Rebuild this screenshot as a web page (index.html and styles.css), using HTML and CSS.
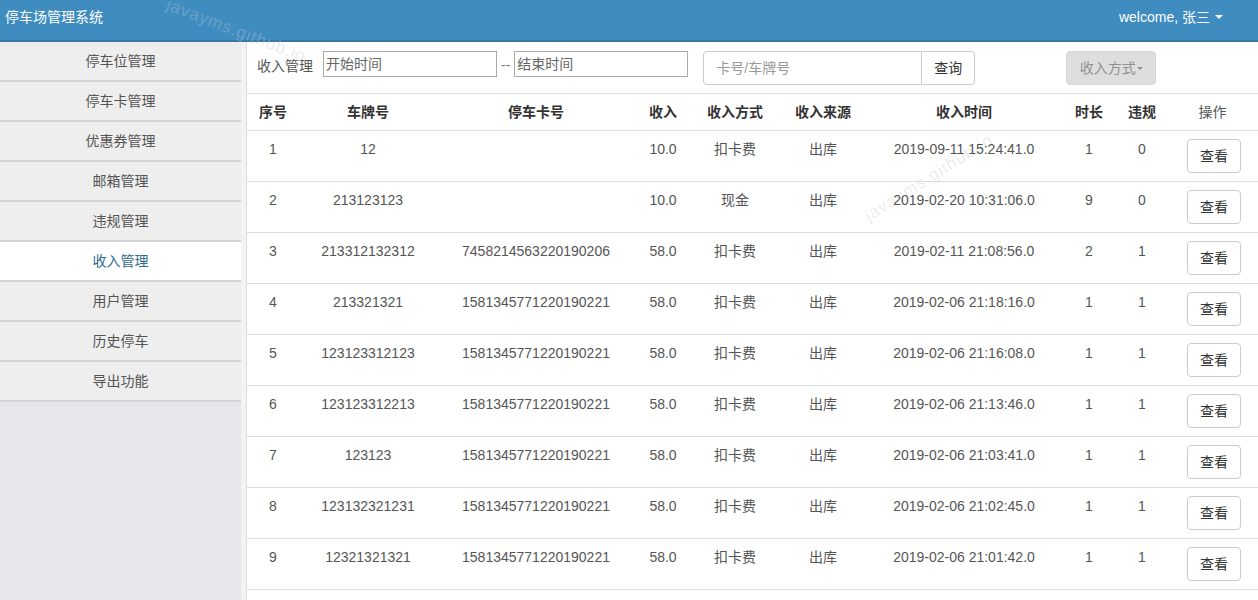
FILE: index.html
```html
<!DOCTYPE html>
<html lang="zh-CN">
<head>
<meta charset="utf-8">
<title>停车场管理系统</title>
<link rel="stylesheet" href="styles.css">
</head>
<body>
<header class="topbar">
  <div class="brand">停车场管理系统</div>
  <div class="user">welcome, 张三 <span class="caret"></span></div>
</header>
<span class="mark mark-top">javayms.github.io</span>
<div class="layout">
  <nav class="sidebar">
    <a class="nav-item">停车位管理</a>
    <a class="nav-item">停车卡管理</a>
    <a class="nav-item">优惠券管理</a>
    <a class="nav-item">邮箱管理</a>
    <a class="nav-item">违规管理</a>
    <a class="nav-item active">收入管理</a>
    <a class="nav-item">用户管理</a>
    <a class="nav-item">历史停车</a>
    <a class="nav-item">导出功能</a>
  </nav>
  <main class="main">
    <div class="toolbar">
      <span class="tb-label">收入管理</span>
      <input class="date-input" type="text" placeholder="开始时间">
      <span class="dash">--</span>
      <input class="date-input" type="text" placeholder="结束时间">
      <div class="search-group">
        <input class="search-input" type="text" placeholder="卡号/车牌号">
        <button class="search-btn" type="button">查询</button>
      </div>
      <button class="type-btn" type="button">收入方式<span class="caret small"></span></button>
    </div>
    <table class="data">
      <colgroup>
        <col class="c1"><col class="c2"><col class="c3"><col class="c4"><col class="c5">
        <col class="c6"><col class="c7"><col class="c8"><col class="c9"><col class="c10">
      </colgroup>
      <thead>
        <tr><th>序号</th><th>车牌号</th><th>停车卡号</th><th>收入</th><th>收入方式</th><th>收入来源</th><th>收入时间</th><th>时长</th><th>违规</th><th class="op">操作</th></tr>
      </thead>
      <tbody>
        <tr><td>1</td><td>12</td><td></td><td>10.0</td><td>扣卡费</td><td>出库</td><td>2019-09-11 15:24:41.0</td><td>1</td><td>0</td><td><button class="view-btn" type="button">查看</button></td></tr>
        <tr><td>2</td><td>213123123</td><td></td><td>10.0</td><td>现金</td><td>出库</td><td>2019-02-20 10:31:06.0</td><td>9</td><td>0</td><td><button class="view-btn" type="button">查看</button></td></tr>
        <tr><td>3</td><td>213312132312</td><td>7458214563220190206</td><td>58.0</td><td>扣卡费</td><td>出库</td><td>2019-02-11 21:08:56.0</td><td>2</td><td>1</td><td><button class="view-btn" type="button">查看</button></td></tr>
        <tr><td>4</td><td>213321321</td><td>1581345771220190221</td><td>58.0</td><td>扣卡费</td><td>出库</td><td>2019-02-06 21:18:16.0</td><td>1</td><td>1</td><td><button class="view-btn" type="button">查看</button></td></tr>
        <tr><td>5</td><td>123123312123</td><td>1581345771220190221</td><td>58.0</td><td>扣卡费</td><td>出库</td><td>2019-02-06 21:16:08.0</td><td>1</td><td>1</td><td><button class="view-btn" type="button">查看</button></td></tr>
        <tr><td>6</td><td>123123312213</td><td>1581345771220190221</td><td>58.0</td><td>扣卡费</td><td>出库</td><td>2019-02-06 21:13:46.0</td><td>1</td><td>1</td><td><button class="view-btn" type="button">查看</button></td></tr>
        <tr><td>7</td><td>123123</td><td>1581345771220190221</td><td>58.0</td><td>扣卡费</td><td>出库</td><td>2019-02-06 21:03:41.0</td><td>1</td><td>1</td><td><button class="view-btn" type="button">查看</button></td></tr>
        <tr><td>8</td><td>123132321231</td><td>1581345771220190221</td><td>58.0</td><td>扣卡费</td><td>出库</td><td>2019-02-06 21:02:45.0</td><td>1</td><td>1</td><td><button class="view-btn" type="button">查看</button></td></tr>
        <tr><td>9</td><td>12321321321</td><td>1581345771220190221</td><td>58.0</td><td>扣卡费</td><td>出库</td><td>2019-02-06 21:01:42.0</td><td>1</td><td>1</td><td><button class="view-btn" type="button">查看</button></td></tr>
      </tbody>
    </table>
    <span class="mark mark-mid">javayms.github.io</span>
  </main>
</div>
</body>
</html>
```

FILE: styles.css
```css
* { box-sizing: border-box; }
html, body { margin: 0; padding: 0; }
body {
  position: relative;
  font-family: "Liberation Sans", Arial, "Noto Sans CJK SC", sans-serif;
  font-size: 14px;
  line-height: 20px;
  color: #333;
  background: #fff;
  width: 1258px;
  height: 600px;
  overflow: hidden;
}
.topbar {
  height: 42px;
  background: #3f8cc0;
  border-bottom: 2px solid #3677a4;
  display: flex;
  justify-content: space-between;
  align-items: flex-start;
  padding: 7px 35px 0 5px;
  color: #fff;
}
.brand { font-size: 14px; line-height: 20px; }
.user { font-size: 14px; line-height: 20px; display: flex; align-items: center; gap: 5px; }
.caret {
  display: inline-block;
  width: 0; height: 0;
  border-left: 4px solid transparent;
  border-right: 4px solid transparent;
  border-top: 4px solid currentColor;
}
.caret.small { border-left-width: 3px; border-right-width: 3px; border-top-width: 3px; margin-left: 1px; }
.mark {
  position: absolute;
  z-index: 5;
  font-size: 17px;
  line-height: 20px;
  letter-spacing: 1px;
  pointer-events: none;
  white-space: nowrap;
}
.mark-top { left: 162px; top: 21px; transform: rotate(21deg); color: rgba(190, 200, 215, 0.35); }
.mark-mid { left: 608px; top: 126px; transform: rotate(-32deg); color: rgba(0, 0, 0, 0.09); }

.layout { display: flex; height: 558px; }
.sidebar {
  width: 246px;
  background: #e6e7eb;
  border-right: 5px solid #f3f3f3;
  display: flex;
  flex-direction: column;
}
.nav-item {
  display: block;
  height: 40px;
  padding-top: 9px;
  text-align: center;
  background: #eeeeee;
  border-bottom: 2px solid #d3d3d3;
  color: #555;
  font-size: 14px;
  line-height: 20px;
}
.nav-item.active { background: #fff; color: #2f6b8e; }

.main {
  position: relative;
  flex: 1;
  border-left: 1px solid #dcdcdc;
  background: #fff;
}
.toolbar {
  height: 52px;
  border-bottom: 1px solid #ddd;
  display: flex;
  align-items: flex-start;
  padding: 9px 0 0 10px;
}
.tb-label { color: #555; line-height: 20px; margin-top: 5px; margin-right: 10px; }
.date-input {
  width: 174px;
  height: 26px;
  border: 1px solid #a9a9a9;
  padding: 0 2px;
  font: inherit;
  font-size: 14px;
  color: #333;
  border-radius: 0;
}
.date-input::placeholder { color: #666; }
.dash { color: #777; margin: 4px 4px 0 4px; line-height: 20px; }
.search-group { display: flex; margin-left: 15px; }
.search-input {
  width: 219px;
  height: 34px;
  border: 1px solid #ccc;
  border-radius: 4px 0 0 4px;
  padding: 0 12px;
  font: inherit;
  color: #555;
}
.search-input::placeholder { color: #999; }
.search-btn {
  width: 53px;
  height: 34px;
  border: 1px solid #ccc;
  border-left: none;
  border-radius: 0 4px 4px 0;
  background: #fff;
  color: #333;
  font: inherit;
  padding: 0;
}
.type-btn {
  margin-left: 91px;
  width: 90px;
  height: 34px;
  border: 1px solid #d5d5d5;
  border-radius: 4px;
  background: #dedede;
  color: #909090;
  font: inherit;
  padding: 0;
  display: flex;
  align-items: center;
  justify-content: center;
}

.data {
  width: 1011px;
  border-collapse: collapse;
  table-layout: fixed;
}
.c1 { width: 52px; } .c2 { width: 138px; } .c3 { width: 198px; } .c4 { width: 56px; }
.c5 { width: 88px; } .c6 { width: 88px; } .c7 { width: 194px; } .c8 { width: 56px; }
.c9 { width: 50px; } .c10 { width: 91px; }
.data th {
  font-weight: bold;
  color: #333;
  padding: 8px 0;
  height: 36px;
  text-align: center;
  border-bottom: 1px solid #ddd;
  white-space: nowrap;
}
.data th.op { font-weight: normal; color: #555; }
.data td {
  padding: 8px 0 8px 0;
  height: 50px;
  text-align: center;
  vertical-align: top;
  border-bottom: 1px solid #ddd;
  color: #555;
  white-space: nowrap;
}
.view-btn {
  width: 54px;
  height: 34px;
  margin-left: 3px;
  border: 1px solid #ccc;
  border-radius: 4px;
  background: #fff;
  color: #333;
  font: inherit;
  padding: 0;
}
```
